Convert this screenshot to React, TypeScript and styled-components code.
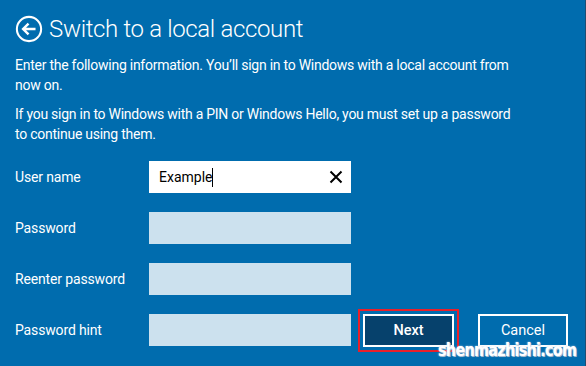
import React from 'react'
import styled, { createGlobalStyle } from 'styled-components'

const GlobalStyle = createGlobalStyle`
  html, body {
    margin: 0;
    padding: 0;
    background: #006cae;
  }
  body {
    font-family: Roboto, 'Noto Sans', sans-serif;
  }
`

const Page = styled.div`
  position: relative;
  width: 586px;
  height: 366px;
  box-sizing: border-box;
  background: #006cae;
  border-right: 1px solid #1f4d72;
  padding: 12px 0 0 15px;
  color: #ffffff;
  overflow: hidden;
`

const Header = styled.div`
  display: flex;
  align-items: center;
  gap: 6px;
  height: 34px;
`

const BackButton = styled.div`
  width: 28px;
  height: 28px;
  display: flex;
  align-items: center;
  justify-content: center;
`

const Title = styled.h1`
  margin: 0;
  font-weight: 300;
  font-size: 24px;
  letter-spacing: -0.35px;
  line-height: 34px;
`

const Para = styled.p<{ $top: number }>`
  margin: ${(p) => p.$top}px 0 0;
  font-size: 14px;
  letter-spacing: -0.25px;
  line-height: 19.5px;
  width: 510px;
`

const Form = styled.div`
  display: grid;
  grid-template-columns: 134px 202px auto;
  grid-auto-rows: 32px;
  row-gap: 19px;
  margin-top: 17px;
  align-items: center;
`

const Label = styled.label`
  font-size: 14px;
  letter-spacing: -0.15px;
`

const Field = styled.div<{ $filled?: boolean }>`
  height: 32px;
  background: ${(p) => (p.$filled ? '#ffffff' : '#cce1ee')};
  display: flex;
  align-items: center;
  padding: 0 8px 0 10px;
  box-sizing: border-box;
  color: #000;
  font-size: 14px;
`

const Value = styled.span`
  flex: 1;
  display: flex;
  align-items: center;
`

const Caret = styled.span`
  display: inline-block;
  width: 1px;
  height: 19px;
  background: #000;
`

const Buttons = styled.div`
  display: flex;
  align-items: center;
  margin-left: 7px;
`

const Highlight = styled.div`
  border: 2.5px solid #e8202a;
  padding: 3px;
`

const Button = styled.button<{ $primary?: boolean }>`
  width: ${(p) => (p.$primary ? 91 : 90)}px;
  height: 33px;
  box-sizing: border-box;
  border: 2px solid #ffffff;
  background: ${(p) => (p.$primary ? '#06416c' : 'transparent')};
  color: #ffffff;
  font-family: Roboto, 'Noto Sans', sans-serif;
  font-size: 14.5px;
  font-weight: ${(p) => (p.$primary ? 500 : 400)};
  padding: 0;
  margin-left: ${(p) => (p.$primary ? 0 : 19)}px;
`

const Watermark = styled.div`
  position: absolute;
  left: 438px;
  top: 339px;
  font-family: 'DejaVu Sans', sans-serif;
  font-weight: 700;
  font-size: 18px;
  letter-spacing: -0.9px;
  transform: scaleX(0.8);
  transform-origin: left center;
  white-space: nowrap;
  color: #ffffff;
  text-shadow: 0 0 2px #c8d8e8, 1px 1px 0 #9fb7cc;
`

const BackIcon = () => (
  <svg width='30' height='30' viewBox='0 0 30 30'>
    <circle cx='15' cy='15' r='13' fill='none' stroke='#fff' strokeWidth='2.2' />
    <path d='M22 15H9M14.5 9.2L8.7 15l5.8 5.8' fill='none' stroke='#fff' strokeWidth='2.6' />
  </svg>
)

const ClearIcon = () => (
  <svg width='14' height='14' viewBox='0 0 14 14'>
    <path d='M1.5 1.5l11 11M12.5 1.5l-11 11' stroke='#000' strokeWidth='2' />
  </svg>
)

export default function App() {
  return (
    <>
      <GlobalStyle />
      <Page>
        <Header>
          <BackButton>
            <BackIcon />
          </BackButton>
          <Title>Switch to a local account</Title>
        </Header>
        <Para $top={10}>
          Enter the following information. You’ll sign in to Windows with a local account from now on.
        </Para>
        <Para $top={10}>
          If you sign in to Windows with a PIN or Windows Hello, you must set up a password to continue using them.
        </Para>
        <Form>
          <Label>User name</Label>
          <Field $filled>
            <Value>
              Example
              <Caret />
            </Value>
            <ClearIcon />
          </Field>
          <span />
          <Label>Password</Label>
          <Field />
          <span />
          <Label>Reenter password</Label>
          <Field />
          <span />
          <Label>Password hint</Label>
          <Field />
          <Buttons>
            <Highlight>
              <Button $primary>Next</Button>
            </Highlight>
            <Button>Cancel</Button>
          </Buttons>
        </Form>
        <Watermark>shenmazhishi.com</Watermark>
      </Page>
    </>
  )
}
